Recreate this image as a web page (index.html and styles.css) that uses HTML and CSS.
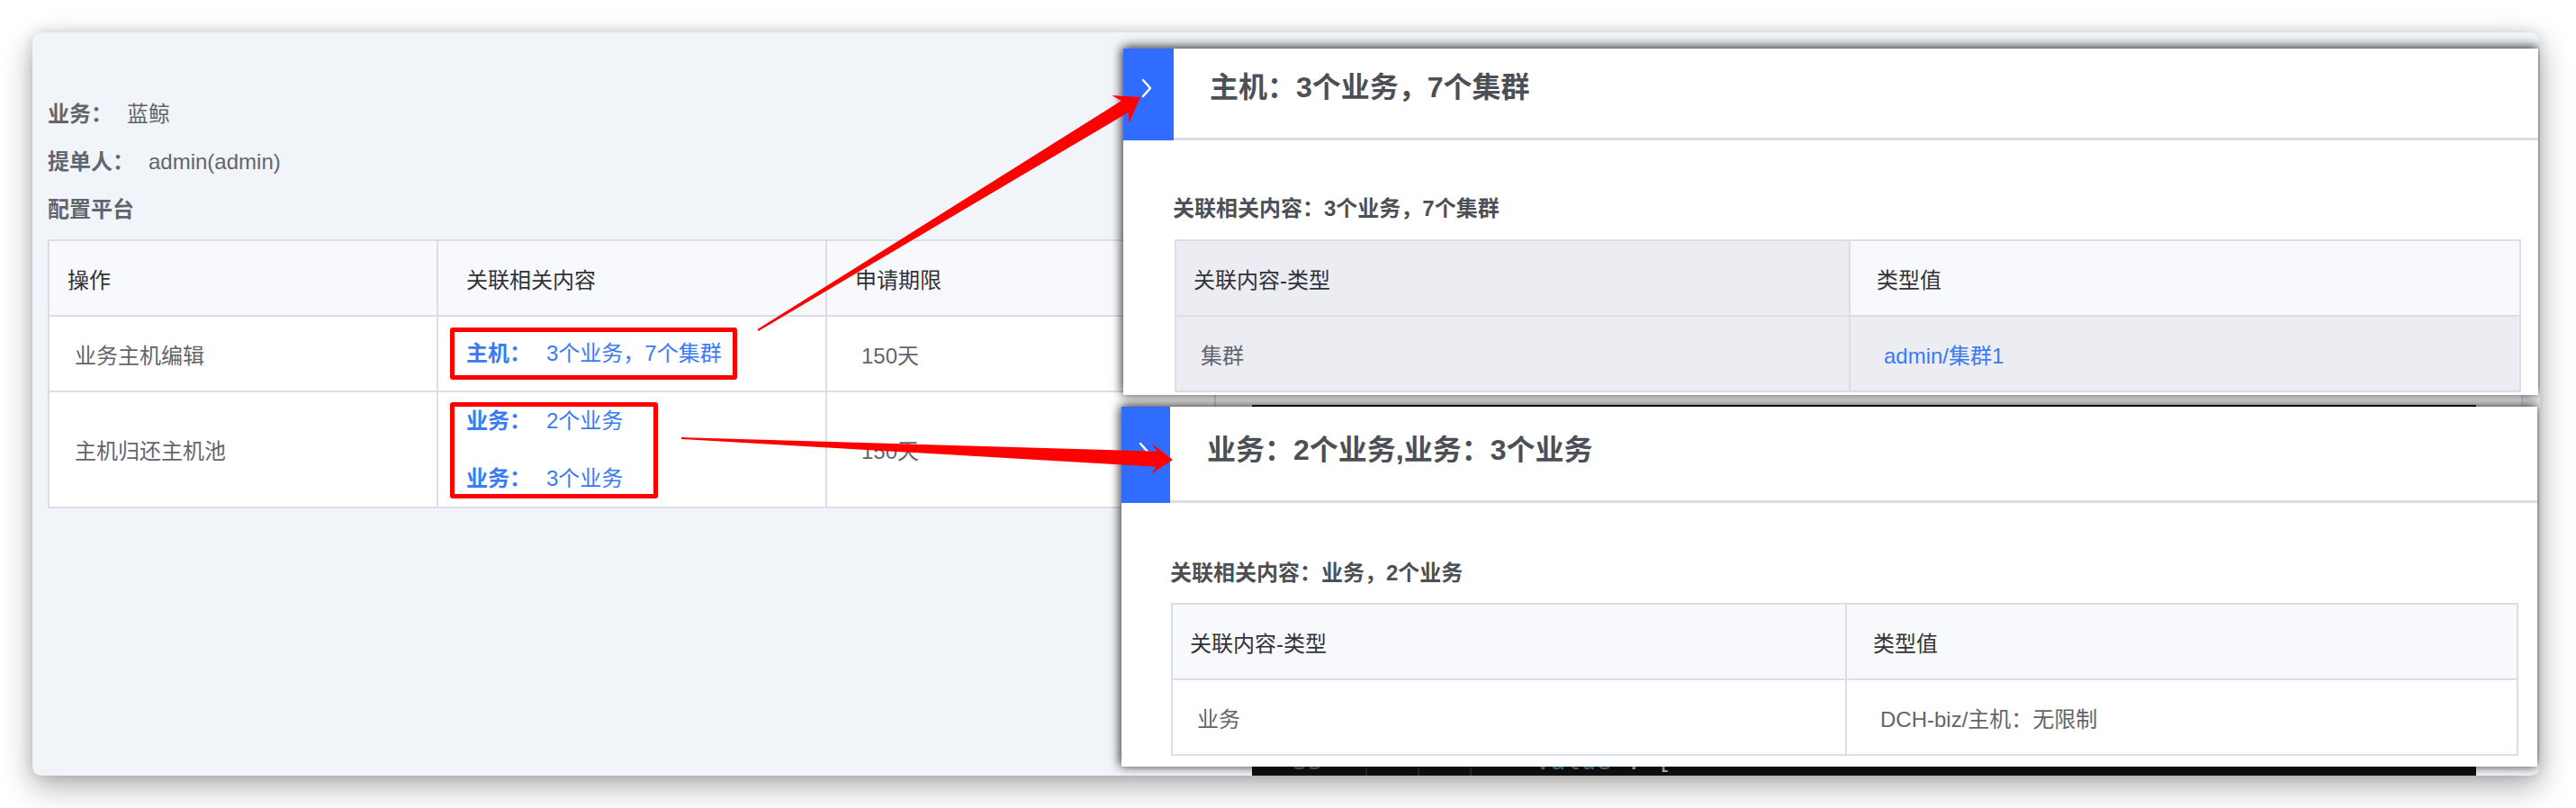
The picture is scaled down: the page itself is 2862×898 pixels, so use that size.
FILE: index.html
```html
<!DOCTYPE html>
<html lang="zh-CN">
<head>
<meta charset="utf-8">
<title>配置平台</title>
<link rel="stylesheet" href="styles.css">
</head>
<body>
<div class="window">
  <div class="main">
    <div class="info"><span class="lbl">业务：</span><span class="val">蓝鲸</span></div>
    <div class="info"><span class="lbl">提单人：</span><span class="val">admin(admin)</span></div>
    <div class="info"><span class="lbl">配置平台</span></div>
    <div class="tbl">
      <div class="cell th c1">操作</div>
      <div class="cell th c2">关联相关内容</div>
      <div class="cell th c3">申请期限</div>
      <div class="cell th c4"></div>

      <div class="cell td c1">业务主机编辑</div>
      <div class="cell td c2"><div class="links"><div class="link"><b>主机：</b><span>3个业务，7个集群</span></div></div></div>
      <div class="cell td c3">150天</div>
      <div class="cell td c4"></div>

      <div class="cell td c1">主机归还主机池</div>
      <div class="cell td c2"><div class="links two"><div class="link"><b>业务：</b><span>2个业务</span></div><div class="link"><b>业务：</b><span>3个业务</span></div></div></div>
      <div class="cell td c3">150天</div>
      <div class="cell td c4"></div>
    </div>
  </div>

  <div class="code-bg">
    <div class="guides"><i></i><i></i><i></i></div>
    <div class="code-line"><span class="ln">33</span><span class="kw">value</span><span class="pn"> : [</span></div>
  </div>

  <section class="drawer d1">
    <div class="d-head">
      <div class="strip"><svg class="chev" width="12" height="22" viewBox="0 0 12 22"><polyline points="2,2 10,11 2,20" fill="none" stroke="#fff" stroke-width="2.4" stroke-linecap="round" stroke-linejoin="round"/></svg></div>
      <div class="d-title">主机：3个业务，7个集群</div>
    </div>
    <div class="d-body">
      <div class="d-sub">关联相关内容：3个业务，7个集群</div>
      <div class="itbl hover">
        <div class="cell th k1 dim">关联内容-类型</div>
        <div class="cell th k2">类型值</div>
        <div class="cell td k1 dim">集群</div>
        <div class="cell td k2 dim"><span class="blue">admin/集群1</span></div>
      </div>
    </div>
  </section>

  <section class="drawer d2">
    <div class="d-head">
      <div class="strip"><svg class="chev" width="12" height="22" viewBox="0 0 12 22"><polyline points="2,2 10,11 2,20" fill="none" stroke="#fff" stroke-width="2.4" stroke-linecap="round" stroke-linejoin="round"/></svg></div>
      <div class="d-title">业务：2个业务,业务：3个业务</div>
    </div>
    <div class="d-body">
      <div class="d-sub">关联相关内容：业务，2个业务</div>
      <div class="itbl">
        <div class="cell th k1">关联内容-类型</div>
        <div class="cell th k2">类型值</div>
        <div class="cell td k1">业务</div>
        <div class="cell td k2">DCH-biz/主机：无限制</div>
      </div>
    </div>
  </section>
</div>

<div class="mark m1"></div>
<div class="mark m2"></div>
<svg class="arrows" width="2862" height="898" viewBox="0 0 2862 898">
  <polygon fill="#ff0000" points="841.5,366.1 1245.9,112.0 1235.4,106.1 1267,108 1254.2,136.9 1253.9,124.8 842.5,367.9"/>
  <polygon fill="#ff0000" points="757,486 1285.4,501.7 1279.7,492.9 1303,511 1278.3,526.9 1284.6,518.7 757,488"/>
</svg>
</body>
</html>
```

FILE: styles.css
```css
* { box-sizing: border-box; }
html, body { margin: 0; padding: 0; }
body {
  width: 2862px;
  height: 898px;
  background: #ffffff;
  font-family: "Liberation Sans", "Noto Sans CJK SC", sans-serif;
  color: #63656e;
  overflow: hidden;
  position: relative;
}
.window {
  position: relative;
  margin: 36px 0 0 36px;
  width: 2786px;
  height: 826px;
  background: #f1f4f9;
  border-radius: 10px;
  overflow: hidden;
  box-shadow: 0 12px 34px rgba(0,0,0,0.32), 0 0 14px rgba(0,0,0,0.12);
}
.main {
  padding: 64px 0 0 17px;
}
.info {
  height: 53px;
  line-height: 53px;
  font-size: 24px;
  color: #63656e;
  display: flex;
}
.lbl { font-weight: 700; margin-right: 16px; }
.val { font-weight: 400; }

.tbl {
  margin-top: 7px;
  width: 2750px;
  display: grid;
  grid-template-columns: 432px 432px 432px 1fr;
  grid-template-rows: 84px 84px 129px;
  border-top: 2px solid #dcdee5;
  border-left: 2px solid #dcdee5;
  font-size: 24px;
}
.cell {
  display: flex;
  align-items: center;
  border-right: 2px solid #dcdee5;
  border-bottom: 2px solid #dcdee5;
  white-space: nowrap;
}
.tbl .th { background: #f7f9fc; color: #313238; }
.tbl .td { background: #ffffff; color: #63656e; }
.tbl .th.c1 { padding-left: 20px; }
.tbl .th.c2, .tbl .th.c3 { padding-left: 31px; }
.tbl .td.c1 { padding-left: 28px; }
.tbl .td.c2 { padding-left: 31px; }
.tbl .td.c3 { padding-left: 38px; }

.links { display: flex; flex-direction: column; }
.link { line-height: 40px; color: #3a7af5; }
.links.two .link { line-height: 64px; }
.link b { font-weight: 700; margin-right: 17px; }

/* code editor window peeking behind drawers */
.code-bg {
  position: absolute;
  left: 1355px;
  top: 414px;
  width: 1360px;
  bottom: 0;
  background: #111111;
  overflow: hidden;
}
.guides { position: absolute; left: 126px; top: 0; bottom: 0; display: flex; gap: 56px; }
.guides i { display: block; width: 2px; background: #2a2a2a; height: 100%; }
.code-line {
  position: absolute;
  left: 45px;
  bottom: 2px;
  font-family: "DejaVu Sans Mono", monospace;
  font-size: 28px;
  line-height: 28px;
  white-space: pre;
}
.code-line .ln { color: #6a6a6a; margin-right: 236px; }
.code-line .kw { color: #5a8eb5; }
.code-line .pn { color: #c8c8c8; }

/* drawers */
.drawer {
  position: absolute;
  background: #ffffff;
  box-shadow: 0 -2px 12px rgba(0,0,0,0.62), -2px 0 10px rgba(0,0,0,0.4);
}
.d1 { left: 1212px; top: 18px; width: 1572px; height: 385px; }
.d2 { left: 1210px; top: 416px; width: 1573px; height: 400px; }
.d-head { display: flex; }
.d1 .d-head { height: 102px; }
.d2 .d-head { height: 107px; }
.strip {
  background: #306cff;
  display: flex;
  justify-content: center;
  align-items: flex-start;
  padding-right: 5px;
}
.d1 .strip { width: 56px; padding-top: 33px; }
.d2 .strip { width: 54px; padding-top: 39px; }
.chev { display: block; }
.d-title {
  flex: 1;
  border-bottom: 3px solid #dcdee5;
  font-size: 32px;
  line-height: 38px;
  font-weight: 700;
  color: #4d4f56;
  white-space: nowrap;
}
.d1 .d-title { padding: 24px 0 0 40px; }
.d2 .d-title { padding: 29px 0 0 41px; }

.d-sub {
  font-size: 24px;
  line-height: 36px;
  font-weight: 700;
  color: #4d4f56;
  white-space: nowrap;
}
.d1 .d-body { padding: 58px 0 0 55px; }
.d2 .d-body { padding: 60px 0 0 54px; }

.itbl {
  display: grid;
  grid-template-columns: 749px 1fr;
  grid-template-rows: 84px 84px;
  border-top: 2px solid #dcdee5;
  border-left: 2px solid #dcdee5;
  font-size: 24px;
  color: #63656e;
}
.d1 .itbl { margin: 16px 0 0 2px; width: 1496px; }
.d2 .itbl { margin: 15px 0 0 1px; width: 1497px; }
.itbl .th { background: #f7f9fc; color: #313238; }
.itbl .td { background: #ffffff; }
.itbl .dim { background: #ebedf2; }
.itbl .th.k1 { padding-left: 19px; }
.itbl .th.k2 { padding-left: 29px; }
.itbl .td.k1 { padding-left: 27px; }
.itbl .td.k2 { padding-left: 37px; }
.blue { color: #3a7af5; }

/* annotations */
.mark {
  position: absolute;
  border: 5px solid #ff0000;
  border-radius: 3px;
}
.m1 { left: 500px; top: 364px; width: 319px; height: 58px; }
.m2 { left: 500px; top: 447px; width: 231px; height: 107px; }
.arrows { position: absolute; left: 0; top: 0; pointer-events: none; }
```
